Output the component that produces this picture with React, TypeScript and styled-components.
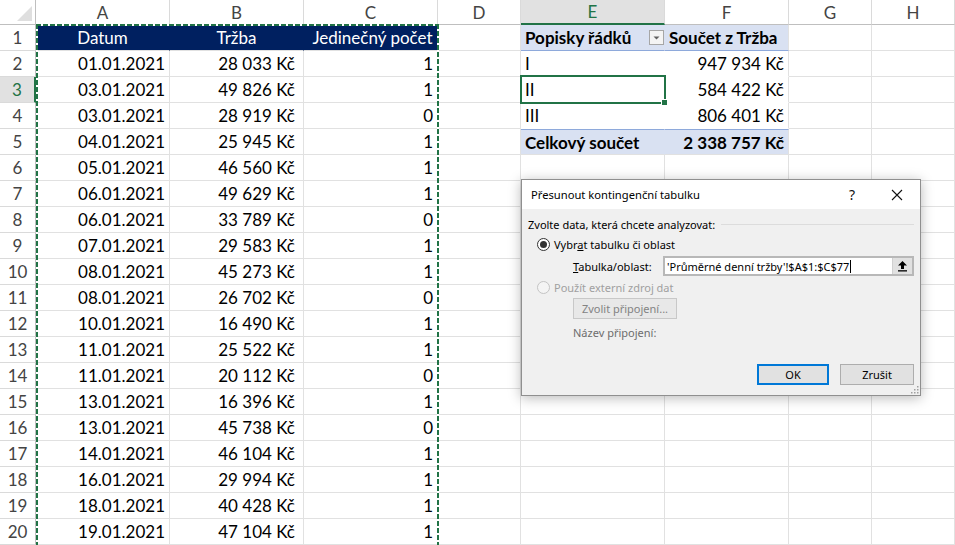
import React from "react";
import styled, { createGlobalStyle, css } from "styled-components";

const GlobalStyle = createGlobalStyle`
  html, body { margin: 0; padding: 0; background: #fff; overflow: hidden; }
  #root { width: 955px; height: 545px; }
`;

const GREEN = "#217346";

const Page = styled.div`
  position: relative;
  width: 955px;
  height: 545px;
  overflow: hidden;
`;

const Sheet = styled.div`
  display: grid;
  grid-template-columns: 36px 134px 134px 134px 83px 144px 124px 83px 83px;
  grid-template-rows: 25px repeat(20, 26px);
  font-family: Lato, "Noto Sans", sans-serif;
  font-size: 17px;
  color: #000;
`;

const Corner = styled.div`
  box-sizing: border-box;
  border-right: 1px solid #bfbfbf;
  border-bottom: 1px solid #bfbfbf;
  display: flex;
  align-items: flex-end;
  justify-content: flex-end;
  padding: 0 2px 2px 0;
`;

const ColHead = styled.div<{ $active?: boolean }>`
  box-sizing: border-box;
  display: flex;
  align-items: center;
  justify-content: center;
  font-size: 17px;
  background: ${(p) => (p.$active ? "#e1e1e1" : "#fff")};
  color: ${(p) => (p.$active ? GREEN : "#444")};
  border-right: 1px solid #dadada;
  border-bottom: ${(p) => (p.$active ? `2px solid ${GREEN}` : "1px solid #bfbfbf")};
`;

const RowHead = styled.div<{ $active?: boolean }>`
  box-sizing: border-box;
  display: flex;
  align-items: center;
  justify-content: center;
  font-size: 17px;
  background: ${(p) => (p.$active ? "#e1e1e1" : "#fff")};
  color: ${(p) => (p.$active ? GREEN : "#444")};
  border-bottom: 1px solid #dadada;
  border-right: ${(p) => (p.$active ? `2px solid ${GREEN}` : "1px solid #bfbfbf")};
`;

type Tone = "plain" | "navy" | "pivotHead" | "pivotBody" | "pivotTotal";

const toneStyles: Record<Tone, ReturnType<typeof css>> = {
  plain: css`
    background: #fff;
    border-right: 1px solid #e1e1e1;
    border-bottom: 1px solid #e1e1e1;
  `,
  navy: css`
    background: #002060;
    color: #fff;
    border-right: 1px solid #002060;
    border-bottom: 1px solid #e1e1e1;
  `,
  pivotHead: css`
    background: #d9e1f2;
    font-weight: 700;
    border-right: 1px solid #d9e1f2;
    border-bottom: 1px solid #8ea9db;
  `,
  pivotBody: css`
    background: #fff;
    border-right: 1px solid #fff;
    border-bottom: 1px solid #fff;
  `,
  pivotTotal: css`
    background: #d9e1f2;
    font-weight: 700;
    border-top: 1px solid #8ea9db;
    border-right: 1px solid #d9e1f2;
    border-bottom: 1px solid #e1e1e1;
  `,
};

const Cell = styled.div<{ $align?: "left" | "right" | "center"; $tone?: Tone; $pr?: number; $last?: boolean }>`
  box-sizing: border-box;
  display: flex;
  align-items: center;
  justify-content: ${(p) =>
    p.$align === "right" ? "flex-end" : p.$align === "center" ? "center" : "flex-start"};
  padding: 0 ${(p) => p.$pr ?? 4}px 0 4px;
  white-space: nowrap;
  ${(p) => toneStyles[p.$tone ?? "plain"]}
  ${(p) => p.$last && css`border-right: 1px solid #e1e1e1;`}
`;

const CellText = styled.span`
  flex: 1;
`;

const FilterBtn = styled.span`
  display: flex;
  align-items: center;
  justify-content: center;
  width: 15px;
  height: 15px;
  box-sizing: border-box;
  border: 1px solid #a6a6a6;
  background: #f4f4f4;
  margin-right: -2px;
`;

const Marquee = styled.div`
  position: absolute;
  left: 36px;
  top: 24px;
  width: 403px;
  height: 700px;
  pointer-events: none;
  background:
    repeating-linear-gradient(90deg, ${GREEN} 0 5px, #fff 5px 7px) left top / 100% 2px no-repeat,
    repeating-linear-gradient(180deg, ${GREEN} 0 5px, #fff 5px 7px) left top / 2px 100% no-repeat,
    repeating-linear-gradient(180deg, ${GREEN} 0 5px, #fff 5px 7px) right top / 2px 100% no-repeat;
`;

const ActiveCell = styled.div`
  position: absolute;
  left: 520px;
  top: 75px;
  width: 146px;
  height: 29px;
  box-sizing: border-box;
  border: 2px solid ${GREEN};
  pointer-events: none;
  &::after {
    content: "";
    position: absolute;
    right: -4px;
    bottom: -4px;
    width: 5px;
    height: 5px;
    background: ${GREEN};
    border: 1px solid #fff;
  }
`;

/* ---------- dialog ---------- */

const Dialog = styled.div`
  position: absolute;
  left: 521px;
  top: 179px;
  width: 400px;
  height: 217px;
  box-sizing: border-box;
  background: #f0f0f0;
  border: 1px solid #8f8f8f;
  box-shadow: 0 2px 12px rgba(0, 0, 0, 0.28);
  font-family: "Noto Sans", "Segoe UI", sans-serif;
  font-size: 11px;
  color: #000;
  display: flex;
  flex-direction: column;
`;

const TitleBar = styled.div`
  height: 29px;
  flex: none;
  background: #fff;
  display: flex;
  align-items: center;
  padding-left: 9px;
`;

const Title = styled.div`
  flex: 1;
  font-size: 11.2px;
`;

const TitleBtn = styled.div<{ $w: number }>`
  width: ${(p) => p.$w}px;
  height: 29px;
  display: flex;
  align-items: center;
  justify-content: center;
  font-size: 14px;
  color: #111;
`;

const Body = styled.div`
  flex: 1;
  display: flex;
  flex-direction: column;
  padding: 0 6px 10px 6px;
`;

const Row = styled.div<{ $h: number; $mt: number; $indent?: number }>`
  height: ${(p) => p.$h}px;
  margin-top: ${(p) => p.$mt}px;
  padding-left: ${(p) => p.$indent ?? 0}px;
  display: flex;
  align-items: center;
  flex: none;
`;

const GroupLine = styled.div`
  flex: 1;
  height: 1px;
  background: #dcdcdc;
  margin-left: 6px;
`;

const Radio = styled.span<{ $checked?: boolean; $disabled?: boolean }>`
  width: 13px;
  height: 13px;
  box-sizing: border-box;
  border-radius: 50%;
  border: 1px solid ${(p) => (p.$disabled ? "#c4c4c4" : "#333")};
  background: ${(p) => (p.$disabled ? "#f4f4f4" : "#fff")};
  display: flex;
  align-items: center;
  justify-content: center;
  margin-right: 4px;
  &::after {
    content: "";
    display: ${(p) => (p.$checked ? "block" : "none")};
    width: 7px;
    height: 7px;
    border-radius: 50%;
    background: #333;
  }
`;

const Label = styled.span<{ $disabled?: boolean; $muted?: boolean }>`
  color: ${(p) => (p.$disabled ? "#a0a0a0" : p.$muted ? "#6d6d6d" : "#000")};
  white-space: nowrap;
`;

const U = styled.span`
  text-decoration: underline;
`;

const RefEdit = styled.div`
  margin-left: auto;
  width: 251px;
  height: 20px;
  box-sizing: border-box;
  border: 2px solid #b8b8b8;
  display: flex;
  background: #fff;
`;

const RefText = styled.div`
  flex: 1;
  display: flex;
  align-items: center;
  padding-left: 2px;
  white-space: nowrap;
  overflow: hidden;
`;

const Caret = styled.span`
  display: inline-block;
  width: 1px;
  height: 13px;
  background: #000;
  margin-left: 1px;
`;

const RefBtn = styled.div`
  width: 19px;
  background: #e1e1e1;
  display: flex;
  align-items: center;
  justify-content: center;
  border-left: 1px solid #d0d0d0;
`;

const PushBtn = styled.div<{ $w: number; $primary?: boolean; $disabled?: boolean }>`
  width: ${(p) => p.$w}px;
  height: 21px;
  box-sizing: border-box;
  display: flex;
  align-items: center;
  justify-content: center;
  background: ${(p) => (p.$disabled ? "#e8e8e8" : "#e1e1e1")};
  border: ${(p) =>
    p.$primary ? "2px solid #0078d7" : p.$disabled ? "1px solid #c8c8c8" : "1px solid #adadad"};
  color: ${(p) => (p.$disabled ? "#838383" : "#000")};
  white-space: nowrap;
`;

const Footer = styled.div`
  margin-top: auto;
  display: flex;
  justify-content: flex-end;
  gap: 11px;
`;

const Grip = styled.svg`
  position: absolute;
  right: 1px;
  bottom: 1px;
`;

/* ---------- data ---------- */

const COLS = ["A", "B", "C", "D", "E", "F", "G", "H"];

const DATA: [string, string, string][] = [
  ["01.01.2021", "28 033 Kč", "1"],
  ["03.01.2021", "49 826 Kč", "1"],
  ["03.01.2021", "28 919 Kč", "0"],
  ["04.01.2021", "25 945 Kč", "1"],
  ["05.01.2021", "46 560 Kč", "1"],
  ["06.01.2021", "49 629 Kč", "1"],
  ["06.01.2021", "33 789 Kč", "0"],
  ["07.01.2021", "29 583 Kč", "1"],
  ["08.01.2021", "45 273 Kč", "1"],
  ["08.01.2021", "26 702 Kč", "0"],
  ["10.01.2021", "16 490 Kč", "1"],
  ["11.01.2021", "25 522 Kč", "1"],
  ["11.01.2021", "20 112 Kč", "0"],
  ["13.01.2021", "16 396 Kč", "1"],
  ["13.01.2021", "45 738 Kč", "0"],
  ["14.01.2021", "46 104 Kč", "1"],
  ["16.01.2021", "29 994 Kč", "1"],
  ["18.01.2021", "40 428 Kč", "1"],
  ["19.01.2021", "47 104 Kč", "1"],
];

const PIVOT: [string, string][] = [
  ["I", "947 934 Kč"],
  ["II", "584 422 Kč"],
  ["III", "806 401 Kč"],
];

function PivotCells({ row }: { row: number }) {
  if (row === 1) {
    return (
      <>
        <Cell $tone="pivotHead" $pr={2}>
          <CellText>Popisky řádků</CellText>
          <FilterBtn>
            <svg width="9" height="6" viewBox="0 0 9 6">
              <path d="M1.5 1.5 L7.5 1.5 L4.5 4.5 Z" fill="#606060" />
            </svg>
          </FilterBtn>
        </Cell>
        <Cell $tone="pivotHead" $pr={2} $last>
          Součet z Tržba
        </Cell>
      </>
    );
  }
  if (row >= 2 && row <= 4) {
    const [label, value] = PIVOT[row - 2];
    return (
      <>
        <Cell $tone="pivotBody">{label}</Cell>
        <Cell $tone="pivotBody" $align="right" $last>
          {value}
        </Cell>
      </>
    );
  }
  if (row === 5) {
    return (
      <>
        <Cell $tone="pivotTotal">Celkový součet</Cell>
        <Cell $tone="pivotTotal" $align="right" $last>
          2 338 757 Kč
        </Cell>
      </>
    );
  }
  return (
    <>
      <Cell />
      <Cell />
    </>
  );
}

function SheetRow({ row }: { row: number }) {
  const first = row === 1;
  const d = first ? null : DATA[row - 2];
  return (
    <>
      <RowHead $active={row === 3}>{row}</RowHead>
      {first ? (
        <>
          <Cell $tone="navy" $align="center">Datum</Cell>
          <Cell $tone="navy" $align="center">Tržba</Cell>
          <Cell $tone="navy" $align="center" $pr={0}>Jedinečný počet</Cell>
        </>
      ) : (
        <>
          <Cell $align="right">{d![0]}</Cell>
          <Cell $align="right" $pr={8}>{d![1]}</Cell>
          <Cell $align="right" $pr={4}>{d![2]}</Cell>
        </>
      )}
      <Cell />
      <PivotCells row={row} />
      <Cell />
      <Cell />
    </>
  );
}

export default function App() {
  const rows = Array.from({ length: 20 }, (_, i) => i + 1);
  return (
    <>
      <GlobalStyle />
      <Page>
        <Sheet>
          <Corner>
            <svg width="17" height="17" viewBox="0 0 17 17">
              <polygon points="16,1 16,16 1,16" fill="#dfdfdf" />
            </svg>
          </Corner>
          {COLS.map((c) => (
            <ColHead key={c} $active={c === "E"}>
              {c}
            </ColHead>
          ))}
          {rows.map((r) => (
            <SheetRow key={r} row={r} />
          ))}
        </Sheet>
        <Marquee />
        <ActiveCell />
        <Dialog>
          <TitleBar>
            <Title>Přesunout kontingenční tabulku</Title>
            <TitleBtn $w={44}>?</TitleBtn>
            <TitleBtn $w={46}>
              <svg width="12" height="12" viewBox="0 0 12 12">
                <path d="M1 1 L11 11 M11 1 L1 11" stroke="#111" strokeWidth="1.1" />
              </svg>
            </TitleBtn>
          </TitleBar>
          <Body>
            <Row $h={18} $mt={6}>
              <Label>Zvolte data, která chcete analyzovat:</Label>
              <GroupLine />
            </Row>
            <Row $h={18} $mt={2} $indent={9}>
              <Radio $checked />
              <Label>
                Vybr<U>a</U>t tabulku či oblast
              </Label>
            </Row>
            <Row $h={20} $mt={3} $indent={45}>
              <Label>
                <U>T</U>abulka/oblast:
              </Label>
              <RefEdit>
                <RefText>
                  'Průměrné denní tržby'!$A$1:$C$77
                  <Caret />
                </RefText>
                <RefBtn>
                  <svg width="11" height="12" viewBox="0 0 11 12">
                    <path d="M5.5 1 L10 5.5 L7 5.5 L7 9 L4 9 L4 5.5 L1 5.5 Z" fill="#000" />
                    <rect x="1" y="10.2" width="9" height="1.3" fill="#000" />
                  </svg>
                </RefBtn>
              </RefEdit>
            </Row>
            <Row $h={18} $mt={2} $indent={9}>
              <Radio $disabled />
              <Label $disabled>Použít externí zdroj dat</Label>
            </Row>
            <Row $h={21} $mt={2} $indent={45}>
              <PushBtn $w={104} $disabled>
                Zvolit připojení...
              </PushBtn>
            </Row>
            <Row $h={18} $mt={4} $indent={45}>
              <Label $muted>Název připojení:</Label>
            </Row>
            <Footer>
              <PushBtn $w={72} $primary>
                OK
              </PushBtn>
              <PushBtn $w={74}>Zrušit</PushBtn>
            </Footer>
          </Body>
          <Grip width="10" height="10" viewBox="0 0 10 10">
            <g fill="#a0a0a0">
              <rect x="8" y="2" width="1.5" height="1.5" />
              <rect x="5" y="5" width="1.5" height="1.5" />
              <rect x="8" y="5" width="1.5" height="1.5" />
              <rect x="2" y="8" width="1.5" height="1.5" />
              <rect x="5" y="8" width="1.5" height="1.5" />
              <rect x="8" y="8" width="1.5" height="1.5" />
            </g>
          </Grip>
        </Dialog>
      </Page>
    </>
  );
}
